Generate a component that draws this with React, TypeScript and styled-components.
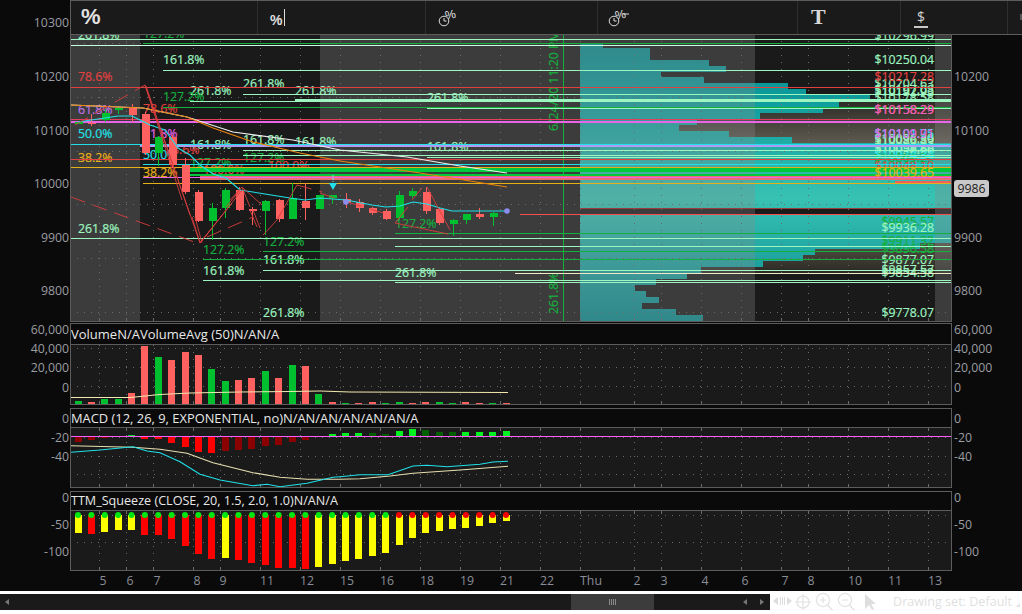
import React from "react";
import styled, { createGlobalStyle } from "styled-components";

const Global = createGlobalStyle`
  html, body { margin: 0; padding: 0; background: #fff; }
  #root { width: 1022px; height: 614px; overflow: hidden; }
`;

const FONT = `"Open Sans", "Liberation Sans", sans-serif`;
const EDGE = "#5c5c5c";

const Root = styled.div`
  position: relative; width: 1022px; height: 614px; overflow: hidden;
  background: #fff; font-family: ${FONT}; font-size: 12.3px;
`;
const Main = styled.div`
  display: flex; flex-direction: column; height: 591px; background: #0a0a0a;
`;
const Pane = styled.div<{ $h: number; $mt?: number }>`
  display: grid; grid-template-columns: 70px 882px 70px;
  height: ${(p) => p.$h}px; margin-top: ${(p) => p.$mt ?? 0}px; flex: none;
`;
const Axis = styled.div`
  position: relative; background: #0a0a0a;
`;
const Tick = styled.span<{ $side: "l" | "r" }>`
  position: absolute; line-height: 16px; white-space: nowrap; color: #9a9da2;
  transform: translateY(-50%);
  ${(p) => (p.$side === "l" ? "right: 1px;" : "left: 2px;")}
`;
const PriceBubble = styled.span`
  position: absolute; left: 2px; top: 180px; width: 35px; height: 17px; line-height: 17px;
  background: #c9c9c9; color: #1c1c1c; border-radius: 3px; text-align: center;
`;
const PlotWrap = styled.div`
  display: flex; flex-direction: column; border: 1px solid ${EDGE}; background: #1a1a1a; min-height: 0;
`;
const PriceWrap = styled(PlotWrap)`
  border-top: none;
`;
const Title = styled.div<{ $h: number; $fs: number }>`
  height: ${(p) => p.$h}px; box-sizing: border-box; flex: none; background: #0a0a0a; color: #e8e8e8;
  line-height: ${(p) => p.$h - 1}px; font-size: ${(p) => p.$fs}px; white-space: nowrap; overflow: hidden;
  border-bottom: 1px solid ${EDGE};
`;
const Plot = styled.svg`
  display: block; flex: 1; width: 880px; min-height: 0;
`;
const TimeAxis = styled.div`
  position: relative; height: 20px; flex: none; background: #0a0a0a;
`;
const TimeLabel = styled.span`
  position: absolute; top: 1px; line-height: 18px; color: #8a8e96; transform: translateX(-50%);
`;
const Bottom = styled.div`
  display: flex; align-items: flex-start; height: 23px; padding-top: 3px; box-sizing: border-box; background: #fff;
`;
const Scroll = styled.div`
  position: relative; width: 770px; height: 16px; background: #1a1a1a; flex: none;
  display: flex; align-items: center;
`;
const Arrow = styled.i<{ $x: number; $dir: "l" | "r" }>`
  position: absolute; left: ${(p) => p.$x}px; top: 5px; width: 0; height: 0;
  border-top: 3px solid transparent; border-bottom: 3px solid transparent;
  ${(p) => (p.$dir === "l" ? "border-right: 4px solid #777;" : "border-left: 4px solid #777;")}
`;
const Thumb = styled.div`
  position: absolute; left: 571px; width: 83px; height: 16px; background: #3c3c3c;
  display: flex; align-items: center; justify-content: center; gap: 1px;
`;
const Grip = styled.span`
  width: 1px; height: 6px; background: #8a8a8a;
`;
const Controls = styled.svg`
  display: block; width: 120px; height: 20px; flex: none; margin-left: 2px; margin-top: -2px;
`;
const DrawingSet = styled.span`
  margin-left: 1px; margin-top: -1px; color: #dfdfdf; font-size: 12.6px; line-height: 18px; white-space: nowrap;
`;
const Corner = styled.i`
  width: 0; height: 0; margin: 9px 0 0 4px; border-left: 4px solid transparent; border-bottom: 4px solid #e2e2e2;
`;

const Toolbar = styled.div`
  position: absolute; left: 70px; top: 0; right: 0; height: 35px; box-sizing: border-box;
  display: flex; background: #1a1a1a; border-top: 1px solid ${EDGE}; border-bottom: 1px solid ${EDGE};
  border-left: 1px solid ${EDGE}; color: #dcdcdc;
`;
const ToolCell = styled.div<{ $w: number; $pl: number }>`
  width: ${(p) => p.$w}px; padding-left: ${(p) => p.$pl}px; box-sizing: border-box; flex: none;
  display: flex; align-items: center; border-right: 1px solid #2f2f2f;
`;
const BigPercent = styled.span`
  font: bold 22px "Liberation Sans", sans-serif; line-height: 22px; color: #e2e2e2; margin-top: -1px;
`;
const SerifT = styled.span`
  font: bold 22px "Liberation Serif", serif; line-height: 22px; color: #d8d8d8; margin-top: -2px;
`;
const Dollar = styled.span`
  font: 14px ${FONT}; line-height: 15px; color: #d0d0d0; border-bottom: 2px solid #c8c8c8; padding: 0 3px 2px; margin-top: 1px;
`;
const ToolIcon = styled.svg`
  display: block; height: 24px;
`;
const ToolText = styled.text`
  font: 12px "Liberation Sans", sans-serif; fill: #e0e0e0;
`;
const ChartText = styled.text`
  font: 12.3px ${FONT}; stroke-width: 0.2;
`;
const EdgeMark = styled.i`
  width: 3px; height: 6px; margin-left: 12px; margin-top: 13px; background: #555;
`;

// ---- data ------------------------------------------------------
const MINT = "#9df5c0";
const GREEN = "#14b03e";
const RED = "#e04040";
const CYAN = "#1fe0e8";
const GOLD = "#e6b018";
const MAG = "#e864e8";
const LIME = "#00c83c";

const X = (i: number) => 78 + i * 13.375;
const ticks = [99, 126, 153, 193, 220, 260, 300, 340, 380, 420, 460, 500, 540, 580, 634, 661, 701, 741, 781, 808, 848, 888, 928];
const timeLabels = ["5", "6", "7", "8", "9", "11", "12", "15", "16", "18", "19", "21", "22", "Thu", "2", "3", "4", "6", "7", "8", "10", "11", "13"];
const timeOffset = [4, 4, 4, 4, 3, 7, 7, 7, 7, 7, 7, 7, 7, 11, 3, 3, 4, 4, 4, 3, 7, 7, 7];

// [top, bottom, right edge]
const profile: [number, number, number][] = [
  [43, 48, 603], [48, 60, 650], [60, 66, 709], [66, 72, 726], [72, 77, 661], [77, 83, 704], [83, 89, 788], [89, 95, 806],
  [95, 101, 870], [101, 107, 839], [107, 113, 823], [113, 119, 760], [119, 125, 697], [125, 131, 679], [131, 137, 729],
  [137, 143, 792], [143, 208, 951], [215, 243, 951], [243, 249, 920], [249, 255, 815], [255, 261, 803], [261, 267, 763],
  [267, 273, 701], [273, 279, 687], [279, 285, 656], [285, 291, 635], [291, 297, 646], [297, 303, 659], [303, 309, 642],
  [309, 315, 676], [315, 321, 703],
];

// [y, x1, colour, width]
const levels: [number, number, string, number][] = [
  [39.5, 70, MINT, 1], [43.5, 143, GREEN, 1], [45.5, 70, "#c8ffe0", 1], [70.5, 163, MINT, 1], [87.5, 70, RED, 1], [94.5, 243, MINT, 1],
  [101.5, 190, MINT, 1], [100, 295, MINT, 2], [107.5, 163, GREEN, 1], [108.5, 427, MINT, 1], [119.5, 70, "#e2405c", 1], [121.5, 70, MAG, 2],
  [144.5, 70, CYAN, 1], [146, 140, "#b09af2", 2], [150.5, 243, MINT, 1], [155.5, 243, MINT, 1], [157.5, 427, MINT, 1], [159.5, 70, RED, 1],
  [164.5, 143, CYAN, 1], [167.5, 70, GOLD, 1], [169, 190, LIME, 2], [171, 190, LIME, 2], [175, 190, LIME, 2],
  [178, 200, "#ec6a72", 4], [177.5, 143, MAG, 1], [181.5, 895, "#f06060", 2], [183.5, 143, GOLD, 1], [208.5, 580, "#9c3c3c", 1],
  [214, 520, "#f25050", 1], [233.5, 395, GREEN, 1], [238.5, 70, MINT, 1], [246.5, 395, MINT, 1], [251.5, 263, GREEN, 1], [259.5, 203, GREEN, 1],
  [270.5, 263, MINT, 1], [280.5, 203, MINT, 1], [282.5, 395, MINT, 1],
];

// [x, center-y, text, colour]
const fibLabels: [number, number, string, string][] = [
  [78, 35, "261.8%", MINT], [143, 34, "127.2%", GREEN], [163, 60, "161.8%", MINT], [78, 77, "78.6%", RED], [243, 84, "261.8%", MINT],
  [190, 91, "261.8%", MINT], [163, 97, "127.2%", GREEN], [295, 91, "261.8%", MINT], [427, 98, "261.8%", MINT], [78, 110, "61.8%", "#c074e8"],
  [143, 109, "78.6%", RED], [143, 134, "61.8%", MAG], [78, 134, "50.0%", CYAN], [243, 140, "161.8%", MINT], [295, 142, "161.8%", MINT],
  [427, 147, "161.8%", MINT], [190, 145, "161.8%", MINT], [165, 150, "78.6%", RED], [143, 155, "50.0%", CYAN], [78, 158, "38.2%", GOLD],
  [243, 158, "127.2%", GREEN], [190, 163, "127.2%", GREEN], [203, 170, "100.0%", RED], [268, 166, "100.0%", RED], [143, 173, "38.2%", GOLD],
  [395, 224, "127.2%", GREEN], [203, 250, "127.2%", GREEN], [263, 242, "127.2%", GREEN], [263, 260, "161.8%", MINT], [203, 271, "161.8%", MINT],
  [78, 229, "261.8%", MINT], [263, 313, "261.8%", MINT], [395, 273, "261.8%", MINT],
];
// [center-y, text, colour]
const priceLabels: [number, string, string][] = [
  [36, "$10296.99", MINT], [60, "$10250.04", MINT], [84, "$10204.63", MINT], [90, "$10197.08", MINT], [92, "$10192.93", MINT],
  [98, "$10178.58", MINT], [77, "$10217.28", RED], [139, "$10096.39", MINT], [141, "$10086.89", MINT], [148, "$10058.86", MINT], [150, "$10058.66", MINT],
  [166, "$10048.10", RED], [158, "$10069.24", GREEN], [155, "$10074.34", CYAN], [134, "$10101.75", CYAN], [134, "$10109.91", MAG],
  [222, "$9945.57", GREEN], [228, "$9936.28", MINT], [241, "$9911.32", GREEN], [249, "$9896.58", GREEN],
  [260, "$9877.07", MINT], [270, "$9857.57", MINT], [273, "$9854.58", MINT], [313, "$9778.07", MINT],
];
const topPriceLabels: [number, string, string][] = [
  [110, "$10158.29", "#f04050"], [110, "$10158.29", "#e864c0"], [173, "$10039.65", GOLD],
];

// [i, open(top), close(bottom), wickTop, wickBottom, up]
const candles: [number, number, number, number, number, boolean][] = [
  [0, 122, 124, 122, 124, true], [1, 123, 124, 114, 126, false], [2, 113, 120, 109, 122, true], [3, 108, 110, 106, 114, true], [4, 107, 115, 104, 122, false],
  [5, 114, 153, 112, 155, false], [6, 137, 153, 136, 166, true], [7, 137, 165, 135, 168, false], [8, 165, 192, 158, 194, false], [9, 192, 221, 190, 222, false],
  [10, 208, 221, 203, 240, true], [11, 190, 208, 188, 218, true], [12, 190, 210, 187, 211, false], [13, 209, 211, 207, 225, false], [14, 201, 211, 200, 235, true],
  [15, 200, 219, 199, 222, false], [16, 198, 219, 183, 219, true], [17, 201, 208, 183, 220, false], [18, 195, 209, 195, 209, true], [19, 195, 198, 196, 204, true],
  [20, 199, 203, 193, 208, false], [21, 202, 208, 199, 212, false], [22, 208, 213, 207, 215, false], [23, 211, 219, 209, 220, false], [24, 195, 218, 191, 220, true],
  [25, 191, 196, 188, 198, true], [26, 192, 211, 187, 214, false], [27, 209, 223, 208, 225, false], [28, 220, 224, 219, 236, true], [29, 214, 220, 214, 224, true],
  [30, 214, 217, 208, 219, false], [31, 213, 217, 212, 226, true],
];

const white = "71,105 143,108 187,117 233,132 293,140 340,150 407,157 460,166 507,173";
const orange = "71,105 143,108 187,117 213,128 253,142 300,153 340,161 420,173 470,181 507,187";
const cyanMa = "78,122 118,116 132,116 150,125 165,130 178,148 190,155 200,165 213,174 226,178 240,190 265,194 290,198 305,200 320,198 346,200 372,205 386,207 400,206 413,202 427,204 440,208 452,211 506,211";

const solidZig: number[][] = [
  [145, 85, 200, 243], [146, 86, 190, 215], [145, 85, 182, 200], [192, 217, 200, 243], [195, 217, 202, 243],
  [200, 243, 213, 227], [200, 243, 232, 203], [200, 243, 242, 190], [230, 200, 242, 187], [242, 187, 250, 207], [253, 210, 260, 228], [250, 210, 257, 227],
  [263, 235, 277, 220], [277, 220, 297, 185], [395, 223, 408, 207], [412, 200, 422, 188], [427, 187, 450, 230], [395, 223, 448, 234],
  [240, 190, 226, 207], [243, 188, 262, 205],
];
const dashZig: number[][] = [
  [71, 197, 197, 243], [75, 125, 145, 85], [207, 237, 253, 217], [297, 185, 322, 192], [320, 193, 340, 200], [347, 202, 390, 215],
];

const volTop = [401, 402, 399, 399, 393, 346, 357, 360, 352, 355, 369, 381, 380, 378, 371, 378, 365, 366, 394, 402, 403, 403, 402, 403, 402, 403, 402, 402, 403, 402, 403, 403, 403];
const volUp = [1, 0, 1, 1, 0, 0, 1, 0, 0, 0, 1, 1, 0, 0, 1, 0, 1, 0, 1, 0, 1, 0, 0, 1, 1, 0, 0, 1, 1, 0, 0, 1, 0];

const macdHist: [number, number, string][] = [
  [0, 442, "#8b0000"], [1, 440, "#8b0000"], [2, 438, "#8b0000"], [4, 435, "#00e626"], [5, 439, "#ff0000"], [6, 439, "#ff0000"], [7, 443, "#ff0000"],
  [8, 447, "#ff0000"], [9, 452, "#ff0000"], [10, 453, "#ff0000"], [11, 451, "#8b0000"], [12, 450, "#8b0000"], [13, 449, "#8b0000"], [14, 446, "#8b0000"],
  [15, 445, "#8b0000"], [16, 442, "#8b0000"], [17, 440, "#8b0000"], [18, 437, "#8b0000"], [19, 434, "#00f020"], [20, 433, "#00f020"], [21, 433, "#00f020"],
  [22, 433, "#006000"], [23, 434, "#006000"], [24, 431, "#00f020"], [25, 429, "#00f020"], [26, 430, "#006000"], [27, 432, "#006000"], [28, 432, "#006000"],
  [29, 432, "#00f020"], [30, 432, "#00f020"], [31, 432, "#00f020"], [32, 431, "#00f020"],
];
const macdSig = "70,445.7 133,447.3 160,449.3 187,453.3 213,462.7 253,472.7 280,477.3 307,479.3 340,479.3 360,478.7 390,476 413,473.3 460,470 508,466.3";
const macdLine = "70,452.3 100,450 133,446.7 147,451 160,452.7 180,461.7 200,474.3 220,480 253,485.7 267,484.3 280,486.7 307,483.3 333,477.3 340,476.7 360,474.7 388,474.7 413,466 427,465.3 447,466.7 480,464.3 493,462 508,461.3";

const ttmBottom = [533, 534, 532, 530, 530, 535, 535, 539, 546, 554, 559, 558, 560, 563, 565, 568, 568, 569, 567, 564, 561, 559, 556, 553, 545, 538, 533, 531, 529, 528, 526, 523, 521];
const ttmRed = [1, 5, 6, 7, 8, 9, 10, 12, 13, 14, 15, 16, 17];

const polyStyle = { fill: "none" } as const;
const barX = (i: number) => Math.round(X(i) - 3.5);

function Ticks({ top, bottom }: { top?: number; bottom: number }) {
  return (
    <g shapeRendering="crispEdges">
      {ticks.map((x) => (
        <g key={x}>
          <line x1={x + 0.5} x2={x + 0.5} y1={bottom - 3} y2={bottom} stroke="#6a6a6a" />
          {top !== undefined && <line x1={x + 0.5} x2={x + 0.5} y1={top} y2={top + 3} stroke="#6a6a6a" />}
        </g>
      ))}
    </g>
  );
}

function Grid({ ys, y1, y2 }: { ys: number[]; y1: number; y2: number }) {
  return (
    <g stroke="#6b6b6b" strokeDasharray="1 6" shapeRendering="crispEdges">
      {ticks.map((x) => <line key={x} x1={x + 0.5} x2={x + 0.5} y1={y1} y2={y2} />)}
      {ys.map((y) => <line key={y} x1={70} x2={951} y1={y + 0.5} y2={y + 0.5} />)}
    </g>
  );
}

function PriceChart() {
  return (
    <Plot viewBox="71 0 880 321" preserveAspectRatio="none">
      <defs>
        <linearGradient id="teal" gradientUnits="userSpaceOnUse" x1="0" x2="0" y1="42" y2="321">
          <stop offset="0" stopColor="#0a8a8c" />
          <stop offset="0.2" stopColor="#0c9c9c" />
          <stop offset="0.56" stopColor="#37c2b3" />
          <stop offset="0.75" stopColor="#22a8a4" />
          <stop offset="1" stopColor="#0a878a" />
        </linearGradient>
        <linearGradient id="under" gradientUnits="userSpaceOnUse" x1="0" x2="0" y1="101" y2="273">
          <stop offset="0" stopColor="#2c2b26" />
          <stop offset="0.25" stopColor="#5f5b50" />
          <stop offset="0.8" stopColor="#5a564b" />
          <stop offset="1" stopColor="#2a2823" />
        </linearGradient>
      </defs>
      <rect x="70" y="0" width="881" height="321" fill="#1a1a1a" />
      <rect x="70" y="34" width="70" height="287" fill="#3c3c3c" />
      <rect x="320" y="34" width="260" height="287" fill="#3c3c3c" />
      {/* volume profile */}
      <rect x="580" y="101" width="371" height="42" fill="url(#under)" />
      <rect x="580" y="243" width="371" height="30" fill="url(#under)" />
      {profile.map(([t, b, r]) => (
        <rect key={t} x="580" y={t} width={r - 580} height={b - t} fill="url(#teal)" />
      ))}
      <rect x="580" y="34" width="175" height="287" fill="#8b8b8b" fillOpacity="0.3" />
      <rect x="935" y="34" width="16" height="287" fill="#8b8b8b" fillOpacity="0.3" />
      <Grid ys={[43, 97, 151, 204, 258, 312]} y1={34} y2={321} />
      {/* labels */}
      {fibLabels.map(([x, y, t, c], i) => (
        <ChartText key={i} x={x} y={y + 4} fill={c} stroke={c}>{t}</ChartText>
      ))}
      {priceLabels.map(([y, t, c], i) => (
        <ChartText key={i} x={934} y={y + 4} fill={c} stroke={c} textAnchor="end">{t}</ChartText>
      ))}
      <ChartText transform="translate(558,131) rotate(-90)" fill={GREEN} stroke={GREEN}>6/24/20 11:20 PM</ChartText>
      <ChartText transform="translate(558,314) rotate(-90)" fill={GREEN} stroke={GREEN}>261.8%</ChartText>
      <line x1="563.5" x2="563.5" y1="34" y2="321" stroke={GREEN} shapeRendering="crispEdges" />
      <line x1="515" x2="951" y1="273.5" y2="273.5" stroke="#f0e8c4" shapeRendering="crispEdges" />
      <g shapeRendering="crispEdges">
        {levels.map(([y, x, c, w], i) => (
          <line key={i} x1={x} x2={951} y1={y} y2={y} stroke={c} strokeWidth={w} />
        ))}
      </g>
      {topPriceLabels.map(([y, t, c], i) => (
        <ChartText key={i} x={934} y={y + 4} fill={c} stroke={c} textAnchor="end">{t}</ChartText>
      ))}
      {/* candles */}
      {candles.map(([i, t, b, wt, wb, up]) => {
        const c = up ? "#00c030" : "#ff6060";
        const x = Math.round(X(i));
        return (
          <g key={i} shapeRendering="crispEdges">
            <line x1={x + 0.5} x2={x + 0.5} y1={wt} y2={wb} stroke={c} strokeWidth="1" />
            <rect x={x - 3} y={t} width="8" height={b - t} fill={c} />
          </g>
        );
      })}
      {/* moving averages */}
      <polyline points={white} stroke="#eeeeee" strokeWidth="1.2" style={polyStyle} />
      <polyline points={orange} stroke="#e8820c" strokeWidth="1.2" style={polyStyle} />
      <polyline points={cyanMa} stroke={CYAN} strokeWidth="1.1" style={polyStyle} />
      {/* zig-zags */}
      <g stroke="#d83c3c" strokeWidth="0.9">
        {solidZig.map((s, i) => <line key={i} x1={s[0]} y1={s[1]} x2={s[2]} y2={s[3]} />)}
        {dashZig.map((s, i) => <line key={i} x1={s[0]} y1={s[1]} x2={s[2]} y2={s[3]} strokeDasharray="15 8" />)}
      </g>
      <line x1="333" x2="333" y1="175" y2="182" stroke="#7fe8ee" strokeDasharray="2 1" />
      <polygon points="329,183 337,183 333,190" fill="#22e0ea" />
      <circle cx="346" cy="202" r="2.8" fill="#8c8cf0" />
      <circle cx="507" cy="211" r="2.8" fill="#8c8cf0" />
      <Ticks bottom={321} />
    </Plot>
  );
}

function VolumeChart() {
  return (
    <Plot viewBox="71 345 880 59" preserveAspectRatio="none">
      <Grid ys={[348, 367, 386]} y1={345} y2={404} />
      <Ticks bottom={404} />
      {volTop.map((t, i) => (
        <rect key={i} x={barX(i)} y={t} width="7" height={404 - t} fill={volUp[i] ? "#00c030" : "#ff6060"} />
      ))}
      <polyline points="70,397.5 130,397.5 160,394.5 190,393 240,392 290,391.5 320,391 350,392 508,392.5" stroke="#f2eab0" strokeWidth="1" style={polyStyle} />
    </Plot>
  );
}

function MacdChart() {
  return (
    <Plot viewBox="71 428 880 59" preserveAspectRatio="none">
      <Grid ys={[437, 456, 474]} y1={428} y2={487} />
      <Ticks top={428} bottom={487} />
      {macdHist.map(([i, y, c]) => (
        <rect key={i} x={barX(i)} y={Math.min(y, 436)} width="7" height={Math.abs(y - 436)} fill={c} />
      ))}
      <line x1="70" x2="951" y1="436.5" y2="436.5" stroke="#ff5cff" strokeWidth="1" shapeRendering="crispEdges" />
      <polyline points={macdSig} stroke="#e8dfb0" strokeWidth="1.1" style={polyStyle} />
      <polyline points={macdLine} stroke={CYAN} strokeWidth="1.1" style={polyStyle} />
    </Plot>
  );
}

function TtmChart() {
  return (
    <Plot viewBox="71 511 880 59" preserveAspectRatio="none">
      <Grid ys={[515, 542]} y1={511} y2={570} />
      <Ticks top={511} bottom={570} />
      {ttmBottom.map((b, i) => (
        <rect key={i} x={barX(i)} y={515} width="7" height={b - 515} fill={ttmRed.includes(i) ? "#ff0000" : "#ffff00"} />
      ))}
      {ttmBottom.map((_, i) => (
        <circle key={i} cx={X(i)} cy={515} r="3" fill={i < 24 ? "#00e610" : "#f00000"} />
      ))}
    </Plot>
  );
}

function AxisColumn({ side, items, children }: { side: "l" | "r"; items: [number, string][]; children?: React.ReactNode }) {
  return (
    <Axis>
      {items.map(([y, t]) => <Tick key={t} $side={side} style={{ top: y }}>{t}</Tick>)}
      {children}
    </Axis>
  );
}

function ClockIcon({ arrow }: { arrow?: boolean }) {
  return (
    <ToolIcon viewBox="0 0 22 24" style={{ width: 22 }}>
      <circle cx="6" cy="15" r="4.8" fill="none" stroke="#dcdcdc" strokeWidth="1" />
      <path d="M6 12v3h2.6" fill="none" stroke="#dcdcdc" />
      <ToolText x="7" y="13" transform="rotate(-12 11 9)">%</ToolText>
      {arrow && <path d="M21 8h-6" stroke="#dcdcdc" fill="none" />}
    </ToolIcon>
  );
}

const priceL: [number, string][] = [[23, "10300"], [77, "10200"], [131, "10100"], [184, "10000"], [238, "9900"], [291, "9800"]];
const priceR: [number, string][] = [[77, "10200"], [131, "10100"], [238, "9900"], [291, "9800"]];
const volAxis: [number, string][] = [[7, "60,000"], [26, "40,000"], [45, "20,000"], [65, "0"]];
const macdAxis: [number, string][] = [[11, "0"], [30, "-20"], [49, "-40"]];
const ttmAxis: [number, string][] = [[7, "0"], [34, "-50"], [61, "-100"]];

export default function App() {
  return (
    <Root>
      <Global />
      <Main>
        <Pane $h={322}>
          <AxisColumn side="l" items={priceL} />
          <PriceWrap><PriceChart /></PriceWrap>
          <AxisColumn side="r" items={priceR}><PriceBubble>9986</PriceBubble></AxisColumn>
        </Pane>
        <Pane $h={82} $mt={1}>
          <AxisColumn side="l" items={volAxis} />
          <PlotWrap>
            <Title $h={21} $fs={13}>VolumeN/AVolumeAvg (50)N/AN/A</Title>
            <VolumeChart />
          </PlotWrap>
          <AxisColumn side="r" items={volAxis} />
        </Pane>
        <Pane $h={80} $mt={3}>
          <AxisColumn side="l" items={macdAxis} />
          <PlotWrap>
            <Title $h={19} $fs={12.9}>MACD (12, 26, 9, EXPONENTIAL, no)N/AN/AN/AN/AN/AN/A</Title>
            <MacdChart />
          </PlotWrap>
          <AxisColumn side="r" items={macdAxis} />
        </Pane>
        <Pane $h={80} $mt={3}>
          <AxisColumn side="l" items={ttmAxis} />
          <PlotWrap>
            <Title $h={19} $fs={12.6}>TTM_Squeeze (CLOSE, 20, 1.5, 2.0, 1.0)N/AN/A</Title>
            <TtmChart />
          </PlotWrap>
          <AxisColumn side="r" items={ttmAxis} />
        </Pane>
        <TimeAxis>
          {timeLabels.map((t, i) => (
            <TimeLabel key={i} style={{ left: ticks[i] + timeOffset[i] }}>{t}</TimeLabel>
          ))}
        </TimeAxis>
      </Main>
      <Bottom>
        <Scroll>
          <Arrow $x={5} $dir="l" />
          <Thumb><Grip /><Grip /><Grip /><Grip /></Thumb>
          <Arrow $x={743} $dir="l" />
          <Arrow $x={760} $dir="r" />
        </Scroll>
        <Controls viewBox="0 0 120 20">
          <g fill="#dedede" stroke="none">
            <path d="M1 9l5-4v8zM20 9l-5-4v8z" />
            <path d="M8 5h1v8H8zM10 5h1v8h-1zM12 5h1v8h-1z" />
          </g>
          <g fill="none" stroke="#e2e2e2" strokeWidth="1.2">
            <circle cx="31" cy="10" r="6" />
            <path d="M31 2v16M23 10h16" />
            <circle cx="51" cy="8" r="6.6" />
            <path d="M55.5 13l5 5.5M48 8h6M51 5v6" />
            <circle cx="73" cy="8" r="6.6" />
            <path d="M77.5 13l5 5.5M70 8h6" />
          </g>
          <path d="M93 2v15l4-4 3 5 2-1-3-5h5z" fill="#dedede" />
        </Controls>
        <DrawingSet>Drawing set: Default</DrawingSet>
        <Corner />
      </Bottom>
      <Toolbar>
        <ToolCell $w={187} $pl={10}><BigPercent>%</BigPercent></ToolCell>
        <ToolCell $w={168} $pl={11}>
          <ToolIcon viewBox="0 0 20 24" style={{ width: 20 }}>
            <ToolText x="1" y="19" style={{ fontSize: 14, fontWeight: 700 }}>%</ToolText>
            <path d="M15.5 3v17" stroke="#dcdcdc" fill="none" />
          </ToolIcon>
        </ToolCell>
        <ToolCell $w={172} $pl={12}><ClockIcon /></ToolCell>
        <ToolCell $w={200} $pl={10}><ClockIcon arrow /></ToolCell>
        <ToolCell $w={103} $pl={13}><SerifT>T</SerifT></ToolCell>
        <ToolCell $w={107} $pl={13}><Dollar>$</Dollar></ToolCell>
        <EdgeMark />
      </Toolbar>
    </Root>
  );
}
